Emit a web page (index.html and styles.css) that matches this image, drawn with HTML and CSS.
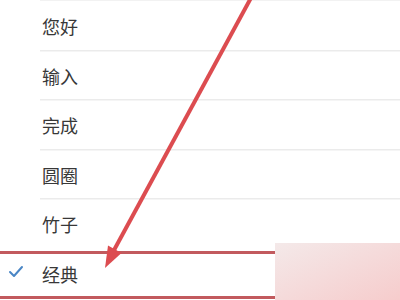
FILE: index.html
```html
<!DOCTYPE html>
<html lang="zh">
<head>
<meta charset="utf-8">
<link rel="stylesheet" href="styles.css">
</head>
<body>
<div class="page">
  <ul class="list">
    <li class="item"><span class="mark"></span><span class="label">您好</span></li>
    <li class="item"><span class="mark"></span><span class="label">输入</span></li>
    <li class="item"><span class="mark"></span><span class="label">完成</span></li>
    <li class="item"><span class="mark"></span><span class="label">圆圈</span></li>
    <li class="item"><span class="mark"></span><span class="label">竹子</span></li>
    <li class="item selected"><span class="mark"><svg width="16" height="14" viewBox="0 0 16 14"><path d="M2 7 L6 11 L14 2" fill="none" stroke="#4a86c5" stroke-width="2" stroke-linecap="round" stroke-linejoin="round"/></svg></span><span class="label">经典</span></li>
  </ul>
  <svg class="annot" width="400" height="300" viewBox="0 0 400 300">
    <defs>
      <linearGradient id="pk" x1="0" y1="0" x2="1" y2="1">
        <stop offset="0" stop-color="#f4e9e9"/>
        <stop offset="1" stop-color="#f6cccc"/>
      </linearGradient>
    </defs>
    <rect x="275" y="243" width="125" height="57" fill="url(#pk)"/>
    <line x1="0" y1="252.5" x2="275" y2="252.5" stroke="#c25a5e" stroke-width="3"/>
    <line x1="0" y1="297.5" x2="275" y2="297.5" stroke="#c25a5e" stroke-width="3"/>
    <line x1="252" y1="-4" x2="113" y2="252" stroke="#dc4c50" stroke-width="4"/>
    <polygon points="105,268 108,245.5 121.5,253" fill="#dc4c50"/>
  </svg>
</div>
</body>
</html>
```
FILE: styles.css
```css
html, body {
  margin: 0;
  padding: 0;
  background: #ffffff;
}
.page {
  position: relative;
  width: 400px;
  height: 300px;
  overflow: hidden;
  font-family: "Noto Sans CJK SC", "Noto Sans", sans-serif;
}
.list {
  list-style: none;
  margin: 0;
  padding: 0;
}
.item {
  display: flex;
  align-items: center;
  height: 49.5px;
  box-sizing: border-box;
  background-image: linear-gradient(#ebebeb, #ebebeb);
  background-repeat: no-repeat;
  background-size: calc(100% - 40px) 1.5px;
  background-position: 40px 0;
}
.item:first-child {
  background-image: linear-gradient(#f2f2f2, #f2f2f2);
  background-size: calc(100% - 40px) 1px;
}
.item.selected {
  background-image: none;
}
.mark {
  width: 42px;
  display: flex;
  justify-content: center;
}
.mark svg {
  display: block;
  margin-left: -10px;
}
.label {
  flex: 1;
  font-size: 18px;
  color: #383838;
  line-height: 1;
  padding-top: 3px;
}
.annot {
  position: absolute;
  left: 0;
  top: 0;
  pointer-events: none;
}
```
